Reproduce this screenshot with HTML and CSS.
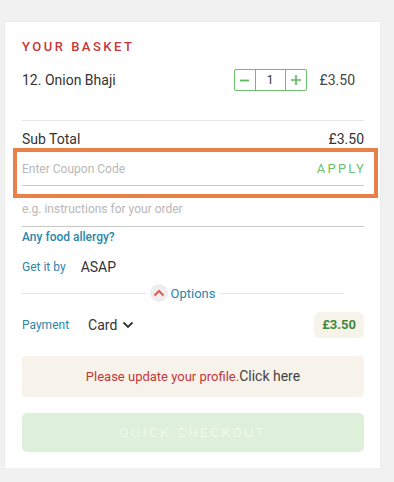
FILE: index.html
```html
<!DOCTYPE html>
<html>
<head>
<meta charset="utf-8">
<link rel="stylesheet" href="styles.css">
</head>
<body>
<div class="card">
  <h2 class="title">YOUR BASKET</h2>
  <div class="item">
    <span class="item-name">12. Onion Bhaji</span>
    <div class="stepper">
      <span class="step-btn"><svg width="11" height="11" viewBox="0 0 11 11"><path d="M1 5.5h9" stroke="#5cb85c" stroke-width="1.8"/></svg></span>
      <span class="step-qty">1</span>
      <span class="step-btn"><svg width="12" height="12" viewBox="0 0 12 12"><path d="M1 6h10M6 1v10" stroke="#5cb85c" stroke-width="1.6"/></svg></span>
    </div>
    <span class="item-price">£3.50</span>
  </div>
  <div class="divider"></div>
  <div class="row subtotal">
    <span>Sub Total</span>
    <span>£3.50</span>
  </div>
  <div class="coupon">
    <span class="placeholder">Enter Coupon Code</span>
    <span class="apply">APPLY</span>
    <div class="highlight"></div>
  </div>
  <div class="instructions">
    <span class="placeholder">e.g. instructions for your order</span>
  </div>
  <div class="allergy">Any food allergy?</div>
  <div class="getit">
    <span class="label">Get it by</span>
    <span class="value">ASAP</span>
  </div>
  <div class="options">
    <span class="opt-circle"><svg width="12" height="8" viewBox="0 0 12 8"><path d="M1.5 6.5L6 2l4.5 4.5" fill="none" stroke="#e05a5a" stroke-width="2"/></svg></span>
    <span class="opt-text">Options</span>
  </div>
  <div class="payment">
    <span class="label">Payment</span>
    <span class="value card-val">Card <svg width="12" height="8" viewBox="0 0 12 8"><path d="M1.5 1.5L6 6l4.5-4.5" fill="none" stroke="#333" stroke-width="1.8"/></svg></span>
    <span class="pill">£3.50</span>
  </div>
  <div class="notice"><span class="notice-red">Please update your profile.</span><span class="notice-link">Click here</span></div>
  <div class="checkout">QUICK CHECKOUT</div>
</div>
</body>
</html>
```

FILE: styles.css
```css
* { box-sizing: border-box; }
body {
  margin: 0;
  background: #f1f1f1;
  font-family: Roboto, "Liberation Sans", sans-serif;
  color: #333;
}
.card {
  margin: 22px 0 0 5px;
  width: 375px;
  background: #fff;
  padding: 17px 16px 16px 17px;
  box-shadow: 0 0 2px rgba(0,0,0,0.06);
}
.title {
  margin: 0;
  font-size: 13px;
  line-height: 16px;
  font-weight: 500;
  letter-spacing: 2.5px;
  color: #c4373a;
}
.item {
  margin-top: 14px;
  display: flex;
  align-items: center;
  height: 22px;
}
.item-name {
  flex: 1;
  font-size: 14px;
  color: #333;
}
.stepper {
  display: flex;
  height: 22px;
  border: 1px solid #6cbd6c;
  border-radius: 2px;
}
.step-btn {
  width: 20px;
  display: flex;
  align-items: center;
  justify-content: center;
}
.step-qty {
  width: 31px;
  border-left: 1px solid #6cbd6c;
  border-right: 1px solid #6cbd6c;
  text-align: center;
  font-size: 12px;
  line-height: 20px;
  color: #333;
}
.item-price {
  margin-left: 13px;
  margin-right: 9px;
  font-size: 14px;
  color: #444;
}
.divider {
  margin-top: 29px;
  height: 1px;
  background: #e6e6e6;
}
.row {
  display: flex;
  justify-content: space-between;
}
.subtotal {
  margin-top: 8px;
  font-size: 14px;
  line-height: 20px;
  color: #333;
}
.coupon {
  position: relative;
  display: flex;
  justify-content: space-between;
  align-items: center;
  padding: 11px 0 7px;
  line-height: 18px;
  border-bottom: 1px solid #c8c8c8;
}
.placeholder {
  font-size: 12px;
  color: #b8b8b8;
}
.apply {
  font-size: 13px;
  letter-spacing: 2.2px;
  color: #6dbf6d;
  margin-right: -2px;
}
.highlight {
  position: absolute;
  left: -9px;
  right: -14px;
  top: -1px;
  bottom: -13px;
  border: 4px solid #e8804a;
  pointer-events: none;
}
.instructions {
  padding: 14px 0 9px;
  line-height: 16px;
  border-bottom: 1px solid #c8c8c8;
}
.allergy {
  margin-top: 2px;
  font-size: 12px;
  line-height: 16px;
  font-weight: 500;
  color: #2a86ab;
}
.getit {
  margin-top: 12px;
  display: flex;
  align-items: center;
  height: 20px;
}
.label {
  font-size: 12px;
  color: #2a86ab;
}
.value {
  font-size: 14px;
  color: #333;
}
.getit .value { margin-left: 15px; }
.options {
  margin-top: 6px;
  height: 20px;
  display: flex;
  align-items: center;
  justify-content: center;
  gap: 3px;
  padding-right: 20px;
}
.options::before, .options::after {
  content: "";
  flex: 1;
  height: 1px;
  background: #e6e6e6;
}
.options::before { margin-right: 1px; }
.options::after { margin-left: 2px; }
.opt-circle {
  width: 18px;
  height: 18px;
  border-radius: 50%;
  background: #f0eded;
  display: flex;
  align-items: center;
  justify-content: center;
}
.opt-text {
  font-size: 13px;
  color: #2a86ab;
}
.payment {
  margin-top: 9px;
  display: flex;
  align-items: center;
  height: 26px;
}
.card-val {
  margin-left: 19px;
  flex: 1;
  display: flex;
  align-items: center;
  gap: 5px;
}
.pill {
  background: #f6f3ea;
  border-radius: 6px;
  padding: 0 8px;
  height: 26px;
  line-height: 26px;
  font-size: 13px;
  font-weight: 700;
  color: #3e8a40;
}
.notice {
  margin-top: 18px;
  height: 41px;
  background: #f7f3ea;
  border-radius: 4px;
  display: flex;
  align-items: center;
  justify-content: center;
}
.notice-red {
  font-size: 13px;
  color: #c4373a;
}
.notice-link {
  font-size: 14px;
  color: #444;
  position: relative;
  top: -1px;
}
.checkout {
  margin-top: 16px;
  height: 39px;
  background: #dff0da;
  border-radius: 5px;
  display: flex;
  align-items: center;
  justify-content: center;
  font-size: 13px;
  font-weight: 300;
  letter-spacing: 2.8px;
  color: #f4faf2;
}
```
